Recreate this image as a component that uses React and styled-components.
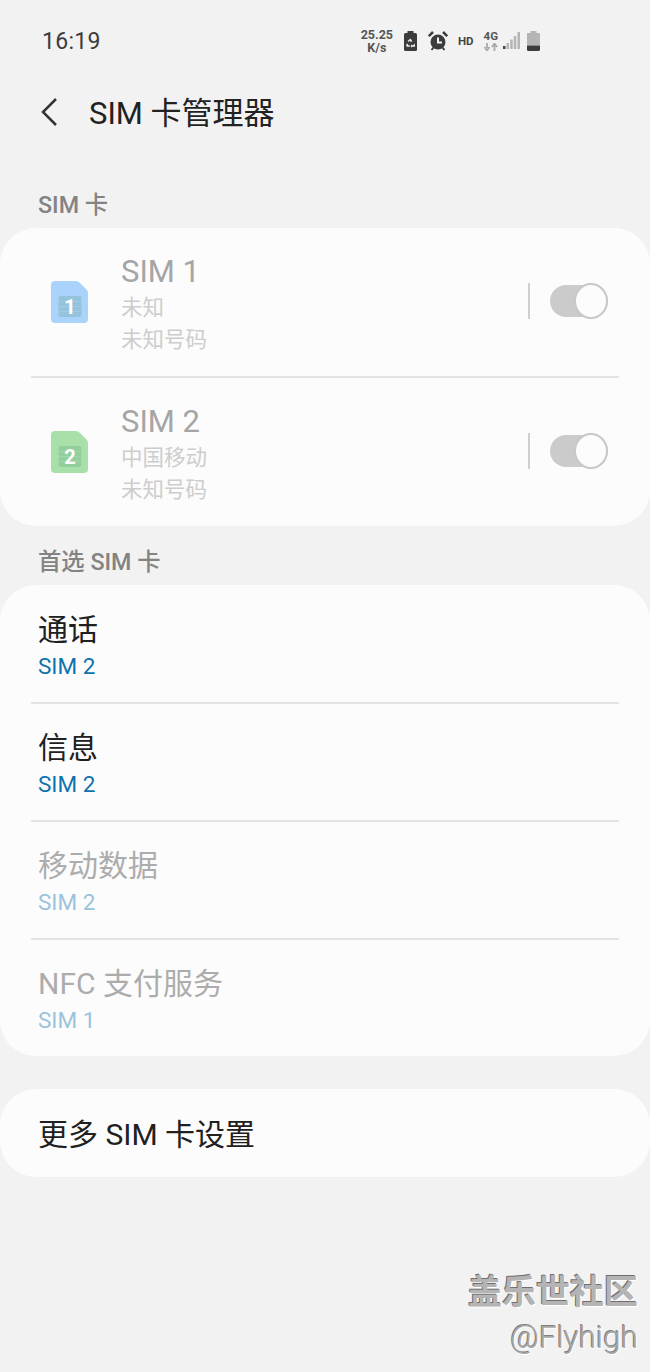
import styled, { createGlobalStyle } from 'styled-components';

const fontStack = `Roboto, "Noto Sans CJK SC", sans-serif`;

const GlobalStyle = createGlobalStyle`
  html, body {
    margin: 0;
    padding: 0;
    background: #f2f2f2;
  }
  * {
    box-sizing: border-box;
  }
`;

const Page = styled.div`
  position: relative;
  width: 650px;
  height: 1372px;
  overflow: hidden;
  background: #f2f2f2;
  font-family: ${fontStack};
`;

const StatusBar = styled.div`
  display: flex;
  align-items: center;
  justify-content: space-between;
  height: 81px;
  padding: 0 110px 0 42px;
  color: #3c3c3c;
`;
const Clock = styled.span`
  padding-top: 2px;
  font-size: 23px;
  letter-spacing: 0.3px;
`;
const StatusGroup = styled.div`
  display: flex;
  align-items: center;
  gap: ${({ $gap }) => $gap}px;
`;
const Speed = styled.div`
  display: flex;
  flex-direction: column;
  align-items: center;
  font-size: 12.5px;
  font-weight: 700;
  line-height: 13px;
  color: #555;
`;
const HdLabel = styled.span`
  font-size: 11.5px;
  font-weight: 700;
  color: #444;
`;
const Network = styled.div`
  display: flex;
  flex-direction: column;
  align-items: center;
  gap: 1px;
  font-size: 11.5px;
  font-weight: 700;
  line-height: 12px;
  color: #555;
`;

const Header = styled.header`
  display: flex;
  align-items: center;
  height: 62px;
  padding-left: 40px;
`;
const BackIcon = styled.svg`
  width: 18px;
  height: 30px;
  margin-right: 31px;
`;
const Title = styled.h1`
  margin: 0;
  padding-bottom: 4px;
  font-size: 31px;
  font-weight: 400;
  color: #222;
`;

const SectionLabel = styled.div`
  display: flex;
  align-items: flex-end;
  height: ${({ $height }) => $height}px;
  padding: 0 0 7px 38px;
  font-size: 23.3px;
  line-height: 32px;
  font-weight: 500;
  color: #838383;
`;

const Card = styled.section`
  background: #fcfcfc;
  border-radius: 36px;
  margin-bottom: ${({ $gap }) => $gap || 0}px;
`;

const SimRow = styled.div`
  display: flex;
  align-items: center;
  height: 148px;
  padding: 0 42px 3px 51px;
`;
const RowDivider = styled.div`
  height: 2px;
  margin: 0 31px;
  background: #e4e4e4;
`;
const SimIcon = styled.svg`
  width: 37px;
  height: 42px;
  margin: 2px 33px 0 0;
`;
const SimInfo = styled.div`
  flex: 1;
  display: flex;
  flex-direction: column;
  padding-top: 7px;
`;
const SimName = styled.div`
  font-size: 31px;
  line-height: 40px;
  color: #a5a5a5;
`;
const SimLine = styled.div`
  font-size: 21.5px;
  line-height: 32px;
  color: #cdcdcd;
`;
const VerticalRule = styled.div`
  width: 2px;
  height: 36px;
  margin-right: 20px;
  background: #cfcfcf;
`;
const Toggle = styled.div`
  position: relative;
  width: 58px;
  height: 32px;
  border-radius: 16px;
  background: #cbcbcb;
`;
const ToggleKnob = styled.div`
  position: absolute;
  top: -2px;
  right: 0;
  width: 34px;
  height: 36px;
  border-radius: 50%;
  background: #fcfcfc;
  border: 2px solid #c8c8c8;
`;

const PrefRow = styled.div`
  display: flex;
  flex-direction: column;
  justify-content: center;
  height: ${({ $height }) => $height}px;
  padding: 2px 0 0 38px;
`;
const PrefTitle = styled.div`
  font-size: 30px;
  line-height: 41px;
  color: ${({ $dim }) => ($dim ? '#acacac' : '#202020')};
`;
const PrefValue = styled.div`
  margin-top: 1px;
  font-size: 22.5px;
  line-height: 30px;
  color: ${({ $dim }) => ($dim ? '#9ac3dc' : '#0d72ad')};
`;

const Watermark = styled.div`
  position: absolute;
  right: 12px;
  top: 1270px;
  display: flex;
  flex-direction: column;
  align-items: flex-end;
  color: #b4b4b4;
`;
const WatermarkBrand = styled.div`
  font-size: 34px;
  line-height: 44px;
  font-weight: 700;
  text-shadow: -1px -1px 0 #6f6f6f, 1px 1px 0 #fff;
`;
const WatermarkUser = styled.div`
  font-size: 31.5px;
  line-height: 44px;
  margin-top: 2px;
  font-weight: 300;
  color: #a8a8a8;
  text-shadow: -1px -1px 0 #808080, 1px 1px 0 #fff;
`;

function RecycleBatteryIcon() {
  return (
    <svg width="13" height="20" viewBox="0 0 13 20">
      <rect x="3.500" y="0" width="6" height="3" fill="#3c3c3c" />
      <rect x="0" y="2" width="13" height="18" rx="1.500" fill="#3c3c3c" />
      <path d="M6.500 7.500l1.800 2.800-1.500.8-1-1.600-.9 1.400-1.300-.8zM2.700 12.500l1.500.9-.4.900h2v1.500H3.200a1 1 0 0 1-.9-1.500zM10.300 12.500l.5 1.600a1 1 0 0 1-.9 1.700H8v1l-1.500-1.800L8 13.300v1h1.200z" fill="#f2f2f2" />
    </svg>
  );
}

function AlarmIcon() {
  return (
    <svg width="20" height="20" viewBox="0 0 20 20">
      <circle cx="10" cy="11" r="7.500" fill="#3c3c3c" />
      <path d="M.8 5.200L5 1M19.200 5.200L15 1" stroke="#3c3c3c" strokeWidth="2.500" fill="none" />
      <path d="M3.500 19l2-2.500M16.500 19l-2-2.500" stroke="#3c3c3c" strokeWidth="2" fill="none" />
      <path d="M10 6.500V11.500h4" stroke="#f2f2f2" strokeWidth="2" fill="none" />
    </svg>
  );
}

function DataArrows() {
  return (
    <svg width="14" height="8" viewBox="0 0 14 8">
      <path d="M3 0v5M0.500 4l2.500 3.500L5.500 4M10.500 8V2.500M8 4l2.500-3.500L13 4" stroke="#aaa" strokeWidth="1.800" fill="none" />
    </svg>
  );
}

function SignalIcon() {
  return (
    <svg width="17" height="18" viewBox="0 0 17 18">
      <rect x="0" y="14" width="2.500" height="3" fill="#444" />
      <rect x="3.500" y="11" width="2.500" height="6" fill="#b5b5b5" />
      <rect x="7.200" y="7.500" width="2.500" height="9.500" fill="#b5b5b5" />
      <rect x="10.800" y="4" width="2.500" height="13" fill="#b5b5b5" />
      <rect x="14.500" y="0" width="2.500" height="17" fill="#b5b5b5" />
    </svg>
  );
}

function BatteryIcon() {
  return (
    <svg width="13" height="20" viewBox="0 0 13 20">
      <rect x="3.500" y="0" width="6" height="3" fill="#b5b5b5" />
      <rect x="0" y="2" width="13" height="12.500" fill="#b5b5b5" />
      <path d="M0 14.500h13v4a1.500 1.500 0 0 1-1.500 1.500h-10A1.500 1.500 0 0 1 0 18.500z" fill="#3c3c3c" />
    </svg>
  );
}

function SimCardIcon({ color, chip, stripe, number }) {
  return (
    <SimIcon viewBox="0 0 37 42">
      <path d="M4 0H25Q27 0 29 2L35 8Q37 10 37 12V38a4 4 0 0 1-4 4H4a4 4 0 0 1-4-4V4a4 4 0 0 1 4-4z" fill={color} />
      <rect x="7.500" y="15" width="23" height="21" rx="2" fill={chip} />
      <path d="M7.500 20.500h23M7.500 25.500h23M7.500 30.500h23" stroke={stripe} strokeWidth="1" fill="none" />
      <text x="19" y="32.500" textAnchor="middle" fontFamily="Roboto, sans-serif" fontWeight="700" fontSize="20" fill="#fff">{number}</text>
    </SimIcon>
  );
}

function SimEntry({ name, carrier, color, chip, stripe, number }) {
  return (
    <SimRow>
      <SimCardIcon color={color} chip={chip} stripe={stripe} number={number} />
      <SimInfo>
        <SimName>{name}</SimName>
        <SimLine>{carrier}</SimLine>
        <SimLine>未知号码</SimLine>
      </SimInfo>
      <VerticalRule />
      <Toggle>
        <ToggleKnob />
      </Toggle>
    </SimRow>
  );
}

const prefs = [
  { title: '通话', value: 'SIM 2', height: 117 },
  { title: '信息', value: 'SIM 2', height: 116 },
  { title: '移动数据', value: 'SIM 2', height: 116, dim: true },
  { title: 'NFC 支付服务', value: 'SIM 1', height: 116, dim: true },
];

export default function App() {
  return (
    <Page>
      <GlobalStyle />
      <StatusBar>
        <Clock>16:19</Clock>
        <StatusGroup $gap={10}>
          <StatusGroup $gap={11}>
            <Speed>
              <span>25.25</span>
              <span>K/s</span>
            </Speed>
            <RecycleBatteryIcon />
            <AlarmIcon />
          </StatusGroup>
          <HdLabel>HD</HdLabel>
          <StatusGroup $gap={5}>
            <Network>
              <span>4G</span>
              <DataArrows />
            </Network>
            <StatusGroup $gap={7}>
              <SignalIcon />
              <BatteryIcon />
            </StatusGroup>
          </StatusGroup>
        </StatusGroup>
      </StatusBar>

      <Header>
        <BackIcon viewBox="0 0 18 30">
          <path d="M16 2L3 15l13 13" stroke="#333" strokeWidth="2.500" fill="none" />
        </BackIcon>
        <Title>SIM 卡管理器</Title>
      </Header>

      <SectionLabel $height={85}>SIM 卡</SectionLabel>
      <Card>
        <SimEntry name="SIM 1" carrier="未知" color="#a9d3fb" chip="#94c4dc" stripe="#a0cce2" number="1" />
        <RowDivider />
        <SimEntry name="SIM 2" carrier="中国移动" color="#a9e0a9" chip="#93cf9d" stripe="#9fd8a6" number="2" />
      </Card>

      <SectionLabel $height={59}>首选 SIM 卡</SectionLabel>
      <Card $gap={33}>
        {prefs.map((pref, i) => (
          <div key={pref.title}>
            {i > 0 && <RowDivider />}
            <PrefRow $height={pref.height}>
              <PrefTitle $dim={pref.dim}>{pref.title}</PrefTitle>
              <PrefValue $dim={pref.dim}>{pref.value}</PrefValue>
            </PrefRow>
          </div>
        ))}
      </Card>

      <Card>
        <PrefRow $height={88}>
          <PrefTitle>更多 SIM 卡设置</PrefTitle>
        </PrefRow>
      </Card>

      <Watermark>
        <WatermarkBrand>盖乐世社区</WatermarkBrand>
        <WatermarkUser>@Flyhigh</WatermarkUser>
      </Watermark>
    </Page>
  );
}
